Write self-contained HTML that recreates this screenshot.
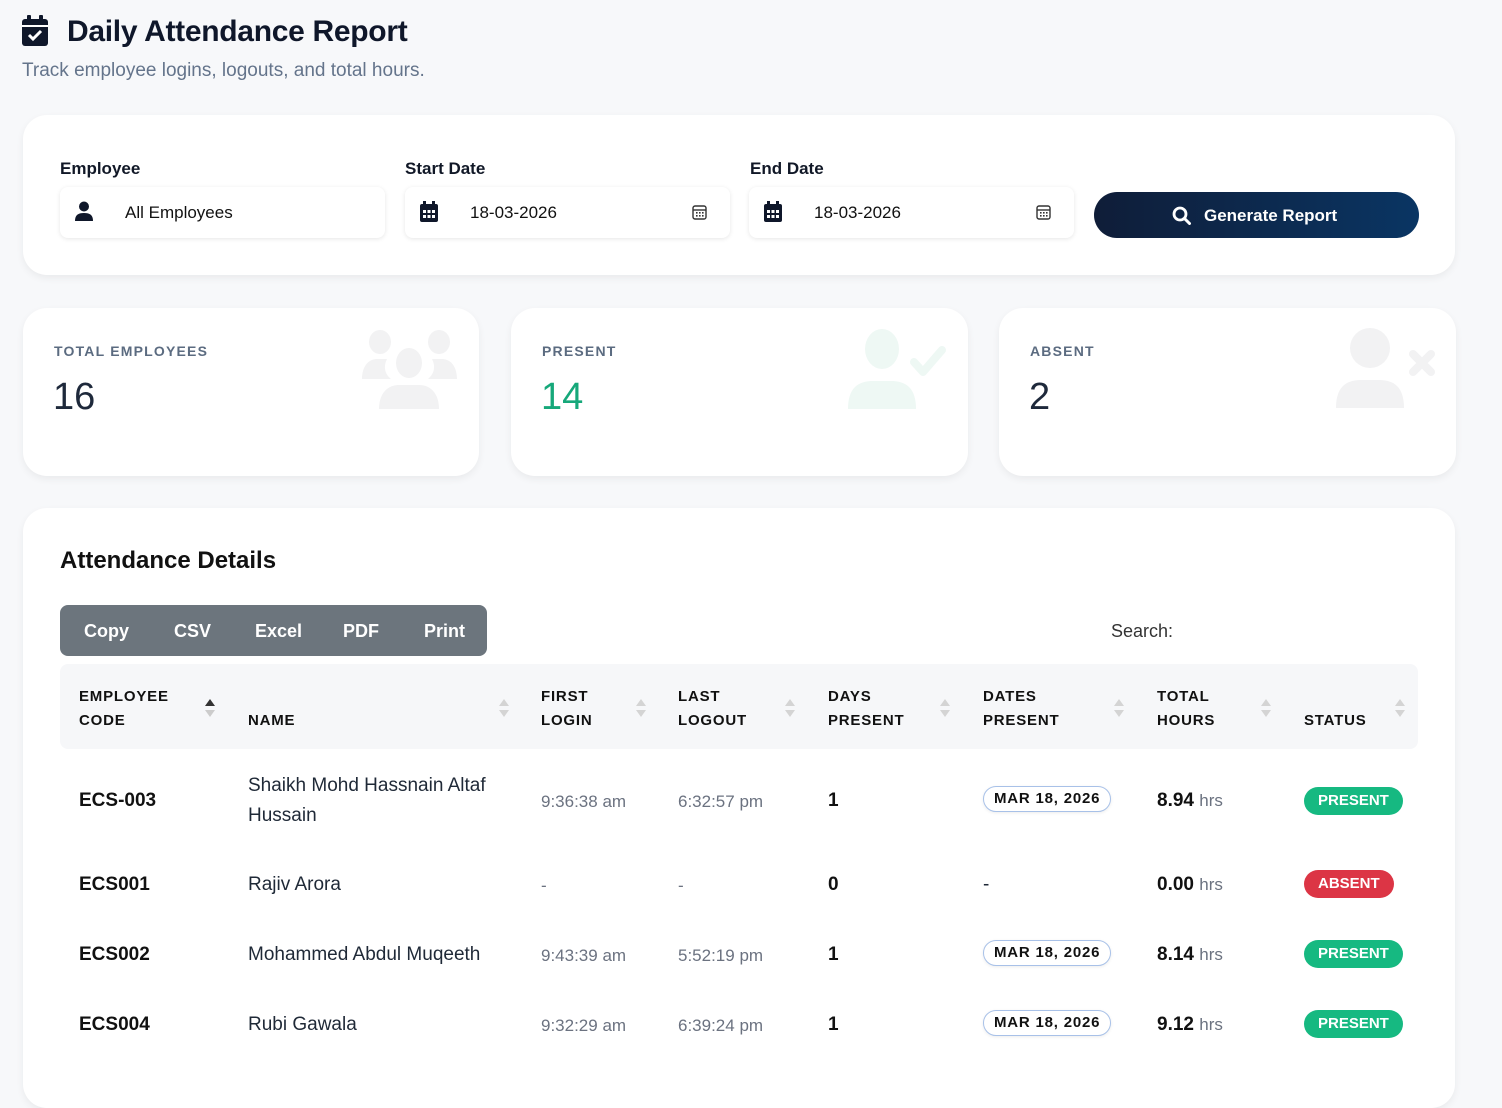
<!DOCTYPE html>
<html><head><meta charset="utf-8"><style>
*{box-sizing:border-box;margin:0;padding:0}
body{width:1502px;height:1061px;overflow:hidden;background:#f7f8fa;font-family:"Liberation Sans",sans-serif;color:#111827;position:relative}
.abs{position:absolute}
h1{position:absolute;left:67px;top:15px;font-size:30px;font-weight:bold;color:#0f172a;letter-spacing:-0.3px}
.sub{left:22px;top:60px;font-size:19px;color:#64748b}
.card{position:absolute;background:#fff;border-radius:24px;box-shadow:0 3px 8px rgba(0,0,0,.06)}
.lbl{position:absolute;top:159px;font-size:17px;font-weight:bold;color:#111827}
.inp{position:absolute;top:187px;height:51px;width:325px;background:#fff;border-radius:8px;box-shadow:0 1px 5px rgba(0,0,0,.1);font-size:17px;color:#111}
.inp span{position:absolute;left:65px;top:16px}
.btn{position:absolute;left:1094px;top:192px;width:325px;height:46px;border-radius:24px;background:linear-gradient(90deg,#0f1d38,#0a3563);color:#fff;font-weight:bold;font-size:17px}
.slabel{position:absolute;left:31px;top:35px;font-size:14px;font-weight:bold;letter-spacing:1.2px;color:#5b6b80}
.snum{position:absolute;left:30px;top:68px;font-size:38px;color:#1e293b}
.th{position:absolute;font-size:15px;font-weight:bold;letter-spacing:.8px;line-height:24px;color:#111}
.sort{position:absolute;width:10px;height:20px}
.td{position:absolute;font-size:19px;color:#1f2937}
.b{font-weight:bold;color:#111}
.g{color:#6b7280;font-size:17px}
.pill{position:absolute;height:26px;border:1px solid #a8c1e8;border-radius:14px;font-size:15px;font-weight:bold;letter-spacing:.8px;padding:3px 10px;color:#111;box-shadow:0 1px 3px rgba(0,0,0,.08)}
.st{position:absolute;height:28px;border-radius:14px;color:#fff;font-size:15px;font-weight:bold;padding:5px 14px;letter-spacing:0}
.hrs{font-weight:bold;color:#111}.hrs small{font-weight:normal;color:#6b7280;font-size:17px}
</style></head><body>
<svg class="abs" style="left:21px;top:15px" width="28" height="32" viewBox="0 0 28 32"><rect x="6" y="0" width="4" height="6" rx="1" fill="#0f172a"/><rect x="18" y="0" width="4" height="6" rx="1" fill="#0f172a"/><rect x="1" y="4" width="26" height="27" rx="3" fill="#0f172a"/><rect x="1" y="10" width="26" height="2" fill="#fff"/><path d="M8 20l4 4 8-8" stroke="#fff" stroke-width="3" fill="none"/></svg>
<h1>Daily Attendance Report</h1>
<div class="abs sub">Track employee logins, logouts, and total hours.</div>

<div class="card" style="left:23px;top:115px;width:1432px;height:160px"></div>
<div class="lbl" style="left:60px">Employee</div>
<div class="lbl" style="left:405px">Start Date</div>
<div class="lbl" style="left:750px">End Date</div>
<div class="inp" style="left:60px"><svg class="abs" style="left:15px;top:14px" width="18" height="20" viewBox="0 0 18 20"><circle cx="9" cy="5.5" r="5" fill="#0f172a"/><path d="M0 20c0-6 3-8 9-8s9 2 9 8z" fill="#0f172a"/></svg><span>All Employees</span></div>
<div class="inp" style="left:405px"><svg class="abs" style="left:15px;top:14px" width="18" height="21" viewBox="0 0 18 21"><rect x="3" y="0" width="3" height="5" fill="#0f172a"/><rect x="12" y="0" width="3" height="5" fill="#0f172a"/><rect x="0" y="3" width="18" height="18" rx="2" fill="#0f172a"/><g fill="#fff"><rect x="3" y="9" width="3" height="3"/><rect x="7.5" y="9" width="3" height="3"/><rect x="12" y="9" width="3" height="3"/><rect x="3" y="14" width="3" height="3"/><rect x="7.5" y="14" width="3" height="3"/><rect x="12" y="14" width="3" height="3"/></g></svg><span>18-03-2026</span><svg class="abs" style="left:287px;top:18px" width="15" height="15" viewBox="0 0 15 15"><rect x="1" y="1" width="13" height="13" rx="2" fill="none" stroke="#333" stroke-width="1.4"/><path d="M1 5h13" stroke="#333" stroke-width="1.4"/><g fill="#333"><rect x="4" y="7" width="1.6" height="1.6"/><rect x="7" y="7" width="1.6" height="1.6"/><rect x="10" y="7" width="1.6" height="1.6"/><rect x="4" y="10" width="1.6" height="1.6"/><rect x="7" y="10" width="1.6" height="1.6"/><rect x="10" y="10" width="1.6" height="1.6"/></g></svg></div>
<div class="inp" style="left:749px"><svg class="abs" style="left:15px;top:14px" width="18" height="21" viewBox="0 0 18 21"><rect x="3" y="0" width="3" height="5" fill="#0f172a"/><rect x="12" y="0" width="3" height="5" fill="#0f172a"/><rect x="0" y="3" width="18" height="18" rx="2" fill="#0f172a"/><g fill="#fff"><rect x="3" y="9" width="3" height="3"/><rect x="7.5" y="9" width="3" height="3"/><rect x="12" y="9" width="3" height="3"/><rect x="3" y="14" width="3" height="3"/><rect x="7.5" y="14" width="3" height="3"/><rect x="12" y="14" width="3" height="3"/></g></svg><span>18-03-2026</span><svg class="abs" style="left:287px;top:18px" width="15" height="15" viewBox="0 0 15 15"><rect x="1" y="1" width="13" height="13" rx="2" fill="none" stroke="#333" stroke-width="1.4"/><path d="M1 5h13" stroke="#333" stroke-width="1.4"/><g fill="#333"><rect x="4" y="7" width="1.6" height="1.6"/><rect x="7" y="7" width="1.6" height="1.6"/><rect x="10" y="7" width="1.6" height="1.6"/><rect x="4" y="10" width="1.6" height="1.6"/><rect x="7" y="10" width="1.6" height="1.6"/><rect x="10" y="10" width="1.6" height="1.6"/></g></svg></div>
<div class="btn"><svg class="abs" style="left:78px;top:14px" width="19" height="19" viewBox="0 0 19 19"><circle cx="8" cy="8" r="6" stroke="#fff" stroke-width="2.8" fill="none"/><path d="M12.5 12.5l5 5" stroke="#fff" stroke-width="3" stroke-linecap="round"/></svg><span class="abs" style="left:110px;top:14px">Generate Report</span></div>

<div class="card" style="left:23px;top:308px;width:456px;height:168px"><div class="slabel">TOTAL EMPLOYEES</div><div class="snum">16</div>
<svg class="abs" style="left:336px;top:20px" width="101" height="81" viewBox="0 0 101 81" fill="#f2f2f3"><ellipse cx="21" cy="14" rx="11" ry="12"/><ellipse cx="80" cy="14" rx="11" ry="12"/><path d="M3 51c0-12 6-20 15-20h10c-4 8-2 15 4 20z"/><path d="M98 51c0-12-6-20-15-20h-10c4 8 2 15-4 20z"/><ellipse cx="50" cy="35" rx="13" ry="15"/><path d="M20 81c0-15 8-24 20-24h20c12 0 20 9 20 24z"/></svg></div>
<div class="card" style="left:511px;top:308px;width:457px;height:168px"><div class="slabel">PRESENT</div><div class="snum" style="color:#16a87a">14</div>
<svg class="abs" style="left:336px;top:20px" width="102" height="81" viewBox="0 0 102 81" fill="#eef8f4"><ellipse cx="35" cy="21" rx="17" ry="20"/><path d="M1 81c0-20 9-28 25-28h18c16 0 25 8 25 28z"/><path d="M67 34l9 10 19-22" stroke="#eef8f4" stroke-width="8" fill="none" stroke-linecap="round" stroke-linejoin="round"/></svg></div>
<div class="card" style="left:999px;top:308px;width:457px;height:168px"><div class="slabel">ABSENT</div><div class="snum">2</div>
<svg class="abs" style="left:336px;top:20px" width="102" height="81" viewBox="0 0 102 81" fill="#f2f2f3"><circle cx="35" cy="20" r="20"/><path d="M1 80c0-20 9-28 25-28h18c16 0 25 8 25 28z"/><path d="M78 26l18 18M96 26l-18 18" stroke="#f2f2f3" stroke-width="8" stroke-linecap="round"/></svg></div>

<div class="card" style="left:23px;top:508px;width:1432px;height:600px"></div>
<div class="abs" style="left:60px;top:547px;font-size:24px;font-weight:bold;color:#111">Attendance Details</div>
<div class="abs" style="left:60px;top:605px;width:427px;height:51px;background:#6c757d;border-radius:8px;color:#fff;font-size:18px;font-weight:bold">
<span class="abs" style="left:24px;top:16px">Copy</span><span class="abs" style="left:114px;top:16px">CSV</span><span class="abs" style="left:195px;top:16px">Excel</span><span class="abs" style="left:283px;top:16px">PDF</span><span class="abs" style="left:364px;top:16px">Print</span></div>
<div class="abs" style="left:1111px;top:621px;font-size:18px;color:#333">Search:</div>

<div class="abs" style="left:60px;top:664px;width:1358px;height:85px;background:#f6f7f9;border-radius:8px"></div>
<div class="th" style="left:79px;top:685px">EMPLOYEE<br>CODE</div>
<div class="th" style="left:248px;top:709px">NAME</div>
<div class="th" style="left:541px;top:685px">FIRST<br>LOGIN</div>
<div class="th" style="left:678px;top:685px">LAST<br>LOGOUT</div>
<div class="th" style="left:828px;top:685px">DAYS<br>PRESENT</div>
<div class="th" style="left:983px;top:685px">DATES<br>PRESENT</div>
<div class="th" style="left:1157px;top:685px">TOTAL<br>HOURS</div>
<div class="th" style="left:1304px;top:709px">STATUS</div>
<svg class="sort" style="left:205px;top:698px" viewBox="0 0 10 20"><path d="M0 8l5-7 5 7z" fill="#333"/><path d="M0 12l5 7 5-7z" fill="#ccc"/></svg>
<svg class="sort" style="left:499px;top:698px" viewBox="0 0 10 20"><path d="M0 8l5-7 5 7zM0 12l5 7 5-7z" fill="#d4d4d4"/></svg>
<svg class="sort" style="left:636px;top:698px" viewBox="0 0 10 20"><path d="M0 8l5-7 5 7zM0 12l5 7 5-7z" fill="#d4d4d4"/></svg>
<svg class="sort" style="left:785px;top:698px" viewBox="0 0 10 20"><path d="M0 8l5-7 5 7zM0 12l5 7 5-7z" fill="#d4d4d4"/></svg>
<svg class="sort" style="left:940px;top:698px" viewBox="0 0 10 20"><path d="M0 8l5-7 5 7zM0 12l5 7 5-7z" fill="#d4d4d4"/></svg>
<svg class="sort" style="left:1114px;top:698px" viewBox="0 0 10 20"><path d="M0 8l5-7 5 7zM0 12l5 7 5-7z" fill="#d4d4d4"/></svg>
<svg class="sort" style="left:1261px;top:698px" viewBox="0 0 10 20"><path d="M0 8l5-7 5 7zM0 12l5 7 5-7z" fill="#d4d4d4"/></svg>
<svg class="sort" style="left:1395px;top:698px" viewBox="0 0 10 20"><path d="M0 8l5-7 5 7zM0 12l5 7 5-7z" fill="#d4d4d4"/></svg>

<div class="td b" style="left:79px;top:790px">ECS-003</div>
<div class="td" style="left:248px;top:771px;line-height:30px">Shaikh Mohd Hassnain Altaf<br>Hussain</div>
<div class="td g" style="left:541px;top:792px">9:36:38 am</div>
<div class="td g" style="left:678px;top:792px">6:32:57 pm</div>
<div class="td b" style="left:828px;top:790px">1</div>
<div class="pill" style="left:983px;top:786px">MAR 18, 2026</div>
<div class="td hrs" style="left:1157px;top:790px">8.94 <small>hrs</small></div>
<div class="st" style="left:1304px;top:787px;background:#16b981">PRESENT</div>

<div class="td b" style="left:79px;top:874px">ECS001</div>
<div class="td" style="left:248px;top:874px">Rajiv Arora</div>
<div class="td g" style="left:541px;top:876px">-</div>
<div class="td g" style="left:678px;top:876px">-</div>
<div class="td b" style="left:828px;top:874px">0</div>
<div class="td" style="left:983px;top:874px">-</div>
<div class="td hrs" style="left:1157px;top:874px">0.00 <small>hrs</small></div>
<div class="st" style="left:1304px;top:870px;background:#dc3545">ABSENT</div>

<div class="td b" style="left:79px;top:944px">ECS002</div>
<div class="td" style="left:248px;top:944px">Mohammed Abdul Muqeeth</div>
<div class="td g" style="left:541px;top:946px">9:43:39 am</div>
<div class="td g" style="left:678px;top:946px">5:52:19 pm</div>
<div class="td b" style="left:828px;top:944px">1</div>
<div class="pill" style="left:983px;top:940px">MAR 18, 2026</div>
<div class="td hrs" style="left:1157px;top:944px">8.14 <small>hrs</small></div>
<div class="st" style="left:1304px;top:940px;background:#16b981">PRESENT</div>

<div class="td b" style="left:79px;top:1014px">ECS004</div>
<div class="td" style="left:248px;top:1014px">Rubi Gawala</div>
<div class="td g" style="left:541px;top:1016px">9:32:29 am</div>
<div class="td g" style="left:678px;top:1016px">6:39:24 pm</div>
<div class="td b" style="left:828px;top:1014px">1</div>
<div class="pill" style="left:983px;top:1010px">MAR 18, 2026</div>
<div class="td hrs" style="left:1157px;top:1014px">9.12 <small>hrs</small></div>
<div class="st" style="left:1304px;top:1010px;background:#16b981">PRESENT</div>
</body></html>
